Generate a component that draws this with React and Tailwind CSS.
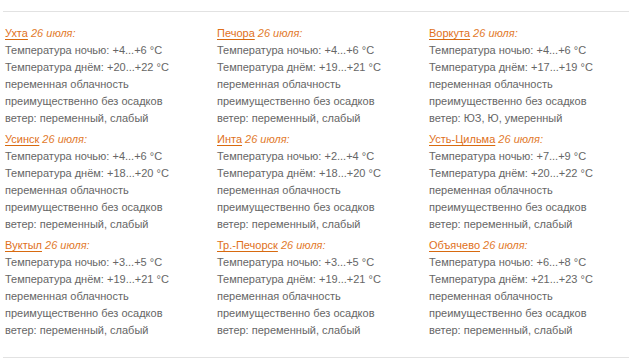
import React from "react";

const cities = [
  { name: "Ухта", night: "+4...+6", day: "+20...+22", wind: "переменный, слабый" },
  { name: "Печора", night: "+4...+6", day: "+19...+21", wind: "переменный, слабый" },
  { name: "Воркута", night: "+4...+6", day: "+17...+19", wind: "ЮЗ, Ю, умеренный" },
  { name: "Усинск", night: "+4...+6", day: "+18...+20", wind: "переменный, слабый" },
  { name: "Инта", night: "+2...+4", day: "+18...+20", wind: "переменный, слабый" },
  { name: "Усть-Цильма", night: "+7...+9", day: "+20...+22", wind: "переменный, слабый" },
  { name: "Вуктыл", night: "+3...+5", day: "+19...+21", wind: "переменный, слабый" },
  { name: "Тр.-Печорск", night: "+3...+5", day: "+19...+21", wind: "переменный, слабый" },
  { name: "Объячево", night: "+6...+8", day: "+21...+23", wind: "переменный, слабый" },
];

function Forecast({ city }) {
  return (
    <div className="mb-[4px]">
      <p>
        <a href="#" className="text-[#e0701a] underline decoration-[#d86a10] underline-offset-2">{city.name}</a>{" "}
        <i className="text-[#e27a2c]">26 июля:</i>
      </p>
      <p>Температура ночью: {city.night} °C</p>
      <p>Температура днём: {city.day} °C</p>
      <p>переменная облачность</p>
      <p>преимущественно без осадков</p>
      <p>ветер: {city.wind}</p>
    </div>
  );
}

export default function App() {
  return (
    <div className="bg-white w-[630px] h-[359px] pl-[3px] pr-px pt-[11px] font-['Liberation_Sans',Arial,sans-serif] text-[11px] leading-[17px] text-[#666]">
      <div className="border-t border-b border-[#e2e2e2] pl-[2px] pt-[13px] pb-[14px]">
        <div className="grid grid-cols-[212px_212px_200px]">
          {cities.map((c) => (
            <Forecast key={c.name} city={c} />
          ))}
        </div>
      </div>
    </div>
  );
}
